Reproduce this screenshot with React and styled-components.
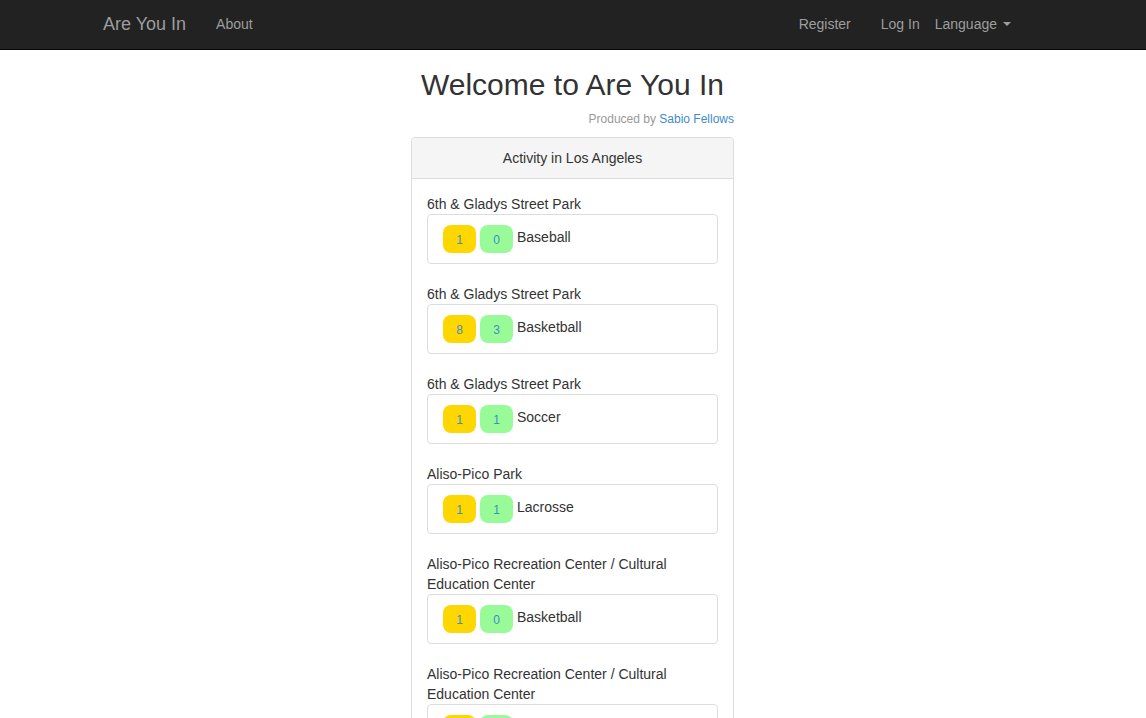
import React from 'react';
import styled, { createGlobalStyle } from 'styled-components';

const GlobalStyle = createGlobalStyle`
  body {
    margin: 0;
    background: #fff;
    font-family: "Liberation Sans", Arial, sans-serif;
    font-size: 14px;
    line-height: 20px;
    color: #333;
  }
`;

const Navbar = styled.nav`
  height: 50px;
  background: #222;
  border-bottom: 1px solid #080808;
  box-sizing: border-box;
`;

const NavContainer = styled.div`
  width: 970px;
  margin: 0 auto;
  padding: 0 15px;
  box-sizing: border-box;
  display: flex;
  align-items: center;
  height: 100%;
`;

const Brand = styled.a`
  font-size: 18px;
  line-height: 20px;
  color: #9d9d9d;
  padding: 14px 15px 16px;
  margin-left: -15px;
  text-decoration: none;
`;

const NavLink = styled.a`
  color: #9d9d9d;
  padding: 14px 15px 16px;
  text-decoration: none;
  display: flex;
  align-items: center;
  ${({ tight }) => tight && 'padding-left: 0; margin-right: 17px;'}
`;

const Spacer = styled.div`
  flex: 1;
`;

const Caret = styled.span`
  display: inline-block;
  width: 0;
  height: 0;
  margin-left: 6px;
  border-top: 4px solid #9d9d9d;
  border-left: 4px solid transparent;
  border-right: 4px solid transparent;
`;

const Page = styled.div`
  padding-right: 1px;
`;

const Main = styled.main`
  width: 323px;
  margin: 0 auto;
`;

const Title = styled.h1`
  margin: 18px -40px 0;
  font-size: 30px;
  font-weight: 400;
  line-height: 33px;
  text-align: center;
  color: #333;
`;

const Credit = styled.div`
  margin-top: 8px;
  font-size: 12px;
  line-height: 20px;
  text-align: right;
  color: #999;

  a {
    color: #428bca;
    text-decoration: none;
  }
`;

const Panel = styled.section`
  margin-top: 8px;
  border: 1px solid #ddd;
  border-radius: 4px;
`;

const PanelHeading = styled.div`
  padding: 10px 15px;
  background: #f5f5f5;
  border-bottom: 1px solid #ddd;
  border-radius: 3px 3px 0 0;
  text-align: center;
`;

const PanelBody = styled.div`
  padding: 15px;
`;

const Item = styled.div`
  margin-bottom: 20px;
`;

const Place = styled.div`
  line-height: 20px;
`;

const Activity = styled.div`
  display: flex;
  align-items: center;
  gap: 4px;
  padding: 10px 15px;
  border: 1px solid #ddd;
  border-radius: 4px;
`;

const Count = styled.span`
  width: 33px;
  height: 28px;
  border-radius: 8px;
  background: ${({ kind }) => (kind === 'in' ? '#ffd700' : '#98fb98')};
  color: #428bca;
  font-size: 12px;
  display: flex;
  align-items: center;
  justify-content: center;
  padding-top: 1px;
  box-sizing: border-box;
`;

const Sport = styled.span`
  margin-top: -4px;
`;

const activities = [
  { place: '6th & Gladys Street Park', sport: 'Baseball', yes: 1, maybe: 0 },
  { place: '6th & Gladys Street Park', sport: 'Basketball', yes: 8, maybe: 3 },
  { place: '6th & Gladys Street Park', sport: 'Soccer', yes: 1, maybe: 1 },
  { place: 'Aliso-Pico Park', sport: 'Lacrosse', yes: 1, maybe: 1 },
  { place: 'Aliso-Pico Recreation Center / Cultural Education Center', sport: 'Basketball', yes: 1, maybe: 0 },
  { place: 'Aliso-Pico Recreation Center / Cultural Education Center', sport: 'Soccer', yes: 1, maybe: 1 },
  { place: 'Alpine Recreation Center', sport: 'Basketball', yes: 2, maybe: 1 },
];

const App = () => (
  <>
    <GlobalStyle />
    <Navbar>
      <NavContainer>
        <Brand href="#">Are You In</Brand>
        <NavLink href="#">About</NavLink>
        <Spacer />
        <NavLink href="#">Register</NavLink>
        <NavLink href="#">Log In</NavLink>
        <NavLink href="#" tight>
          Language <Caret />
        </NavLink>
      </NavContainer>
    </Navbar>
    <Page>
      <Main>
        <Title>Welcome to Are You In</Title>
        <Credit>
          Produced by <a href="#">Sabio Fellows</a>
        </Credit>
        <Panel>
          <PanelHeading>Activity in Los Angeles</PanelHeading>
          <PanelBody>
            {activities.map((a, i) => (
              <Item key={i}>
                <Place>{a.place}</Place>
                <Activity>
                  <Count kind="in">{a.yes}</Count>
                  <Count kind="maybe">{a.maybe}</Count>
                  <Sport>{a.sport}</Sport>
                </Activity>
              </Item>
            ))}
          </PanelBody>
        </Panel>
      </Main>
    </Page>
  </>
);

export default App;
